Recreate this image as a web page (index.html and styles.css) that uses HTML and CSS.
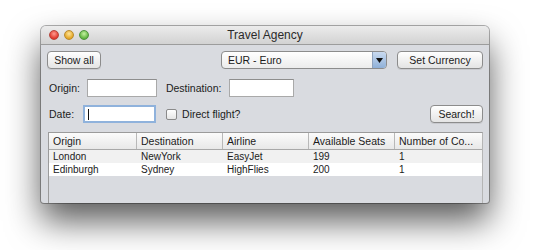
FILE: index.html
```html
<html>

<head>
    <title>Travel Agency</title>
    <link rel="stylesheet" href="styles.css">
</head>

<body>
    <div class="stage">
        <div class="window">
            <div class="titlebar">
                <div class="lights">
                    <span class="light red"></span>
                    <span class="light yellow"></span>
                    <span class="light green"></span>
                </div>
                <div class="title">Travel Agency</div>
            </div>

            <div class="content">
                <div class="row">
                    <button class="btn show-all">Show all</button>
                    <div class="right-group">
                        <div class="combo">
                            <span class="combo-text">EUR - Euro</span>
                            <span class="combo-arrow">
                                <svg width="7" height="5" viewBox="0 0 7 5"><path d="M0 0 L7 0 L3.5 5 Z" fill="#111"/></svg>
                            </span>
                        </div>
                        <button class="btn set-currency">Set Currency</button>
                    </div>
                </div>

                <div class="row row-fields">
                    <label class="label">Origin:</label>
                    <input class="field origin" type="text">
                    <label class="label dest-label">Destination:</label>
                    <input class="field destination" type="text">
                </div>

                <div class="row row-date">
                    <label class="label">Date:</label>
                    <div class="field date focused"><span class="caret"></span></div>
                    <span class="checkbox"></span>
                    <span class="check-label">Direct flight?</span>
                    <button class="btn search">Search!</button>
                </div>

                <div class="table">
                    <div class="thead">
                        <div class="cell">Origin</div>
                        <div class="cell">Destination</div>
                        <div class="cell">Airline</div>
                        <div class="cell">Available Seats</div>
                        <div class="cell last">Number of Co...</div>
                    </div>
                    <div class="trow odd">
                        <div class="cell">London</div>
                        <div class="cell">NewYork</div>
                        <div class="cell">EasyJet</div>
                        <div class="cell">199</div>
                        <div class="cell">1</div>
                    </div>
                    <div class="trow">
                        <div class="cell">Edinburgh</div>
                        <div class="cell">Sydney</div>
                        <div class="cell">HighFlies</div>
                        <div class="cell">200</div>
                        <div class="cell">1</div>
                    </div>
                </div>
            </div>
        </div>
    </div>
</body>

</html>
```

FILE: styles.css
```css
body {
    margin: 0;
    background: #fff;
    font-family: "Liberation Sans", Arial, sans-serif;
    color: #1b1b1b;
}

.stage {
    padding: 26px 0 0 41px;
}

.window {
    width: 448px;
    height: 177px;
    background: #d9dbe0;
    border-radius: 5px 5px 3px 3px;
    box-shadow: 0 0 0 1px rgba(0, 0, 0, 0.3), 0 18px 34px rgba(0, 0, 0, 0.65);
    overflow: hidden;
    display: flex;
    flex-direction: column;
}

.titlebar {
    height: 18px;
    position: relative;
    background: linear-gradient(#ececec, #d2d2d2);
    border-bottom: 1px solid #9c9c9c;
    display: flex;
    align-items: center;
    justify-content: center;
}

.lights {
    position: absolute;
    left: 8px;
    top: 4px;
    display: flex;
    gap: 5px;
}

.light {
    width: 10px;
    height: 10px;
    border-radius: 50%;
    box-sizing: border-box;
}

.red {
    background: radial-gradient(circle at 50% 35%, #ff9b8f, #e0372b 70%);
    border: 1px solid #b5453b;
}

.yellow {
    background: radial-gradient(circle at 50% 35%, #ffe59a, #e3a523 70%);
    border: 1px solid #b88a30;
}

.green {
    background: radial-gradient(circle at 50% 35%, #c5f2a2, #5fb33f 70%);
    border: 1px solid #4f9140;
}

.title {
    font-size: 12px;
    color: #2a2a2a;
}

.content {
    flex: 1;
    display: flex;
    flex-direction: column;
    padding: 6px 6px 0 6px;
}

.row {
    display: flex;
    align-items: center;
    height: 18px;
}

.row-fields {
    margin-top: 10px;
}

.row-date {
    margin-top: 8px;
}

.right-group {
    margin-left: auto;
    display: flex;
    gap: 10px;
}

.btn {
    height: 18px;
    padding: 0;
    font-family: inherit;
    font-size: 10.5px;
    color: #1b1b1b;
    border: 1px solid #8c8c8c;
    border-radius: 4px;
    background: linear-gradient(#ffffff, #f1f1f1 50%, #e4e4e4);
    box-shadow: 0 1px 0 rgba(0, 0, 0, 0.08);
}

.show-all {
    width: 54px;
}

.set-currency {
    width: 86px;
}

.search {
    width: 53px;
    margin-left: auto;
}

.combo {
    width: 166px;
    height: 18px;
    box-sizing: border-box;
    border: 1px solid #8c8c8c;
    border-radius: 4px;
    background: linear-gradient(#ffffff, #ececec);
    display: flex;
    align-items: center;
    overflow: hidden;
}

.combo-text {
    flex: 1;
    font-size: 10.5px;
    padding-left: 6px;
}

.combo-arrow {
    width: 13px;
    height: 100%;
    border-left: 1px solid #8ea2bd;
    background: linear-gradient(#c9daf0, #8fb0d8);
    display: flex;
    align-items: center;
    justify-content: center;
}

.label {
    font-size: 10.5px;
    margin-left: 2px;
}

.dest-label {
    margin-left: 9px;
}

.field {
    height: 18px;
    box-sizing: border-box;
    border: 1px solid #a9a9a9;
    border-top-color: #8e8e8e;
    background: #fff;
    padding: 0;
}

.origin {
    width: 70px;
    margin-left: 7px;
}

.destination {
    width: 65px;
    margin-left: 8px;
}

.date {
    width: 73px;
    margin-left: 9px;
    display: flex;
    align-items: center;
}

.focused {
    border: 2px solid #8fb2dc;
}

.caret {
    width: 1px;
    height: 11px;
    margin-left: 3px;
    background: #111;
}

.checkbox {
    width: 11px;
    height: 11px;
    box-sizing: border-box;
    margin-left: 10px;
    border: 1px solid #8a8a8a;
    border-radius: 2px;
    background: linear-gradient(#ffffff, #e6e6e6);
}

.check-label {
    font-size: 10.5px;
    margin-left: 5px;
}

.table {
    margin: 9px 0 0 1px;
    flex: 1;
    border-left: 1px solid #9b9b9b;
    border-top: 1px solid #9b9b9b;
    border-right: 1px solid #b5b5b5;
    font-size: 10px;
}

.thead {
    display: flex;
    height: 16px;
    background: linear-gradient(#fbfbfb, #e8e8e8);
    border-bottom: 1px solid #a8a8a8;
}

.thead .cell {
    border-right: 1px solid #b8b8b8;
    line-height: 16px;
    font-size: 10.5px;
}

.thead .cell.last {
    border-right: none;
}

.cell {
    width: 86px;
    box-sizing: border-box;
    padding-left: 4px;
    white-space: nowrap;
    overflow: hidden;
}

.cell:first-child {
    width: 88px;
}

.trow {
    display: flex;
    height: 13px;
    line-height: 13px;
    background: #fff;
}

.trow.odd {
    background: #f1f1f1;
}
```
